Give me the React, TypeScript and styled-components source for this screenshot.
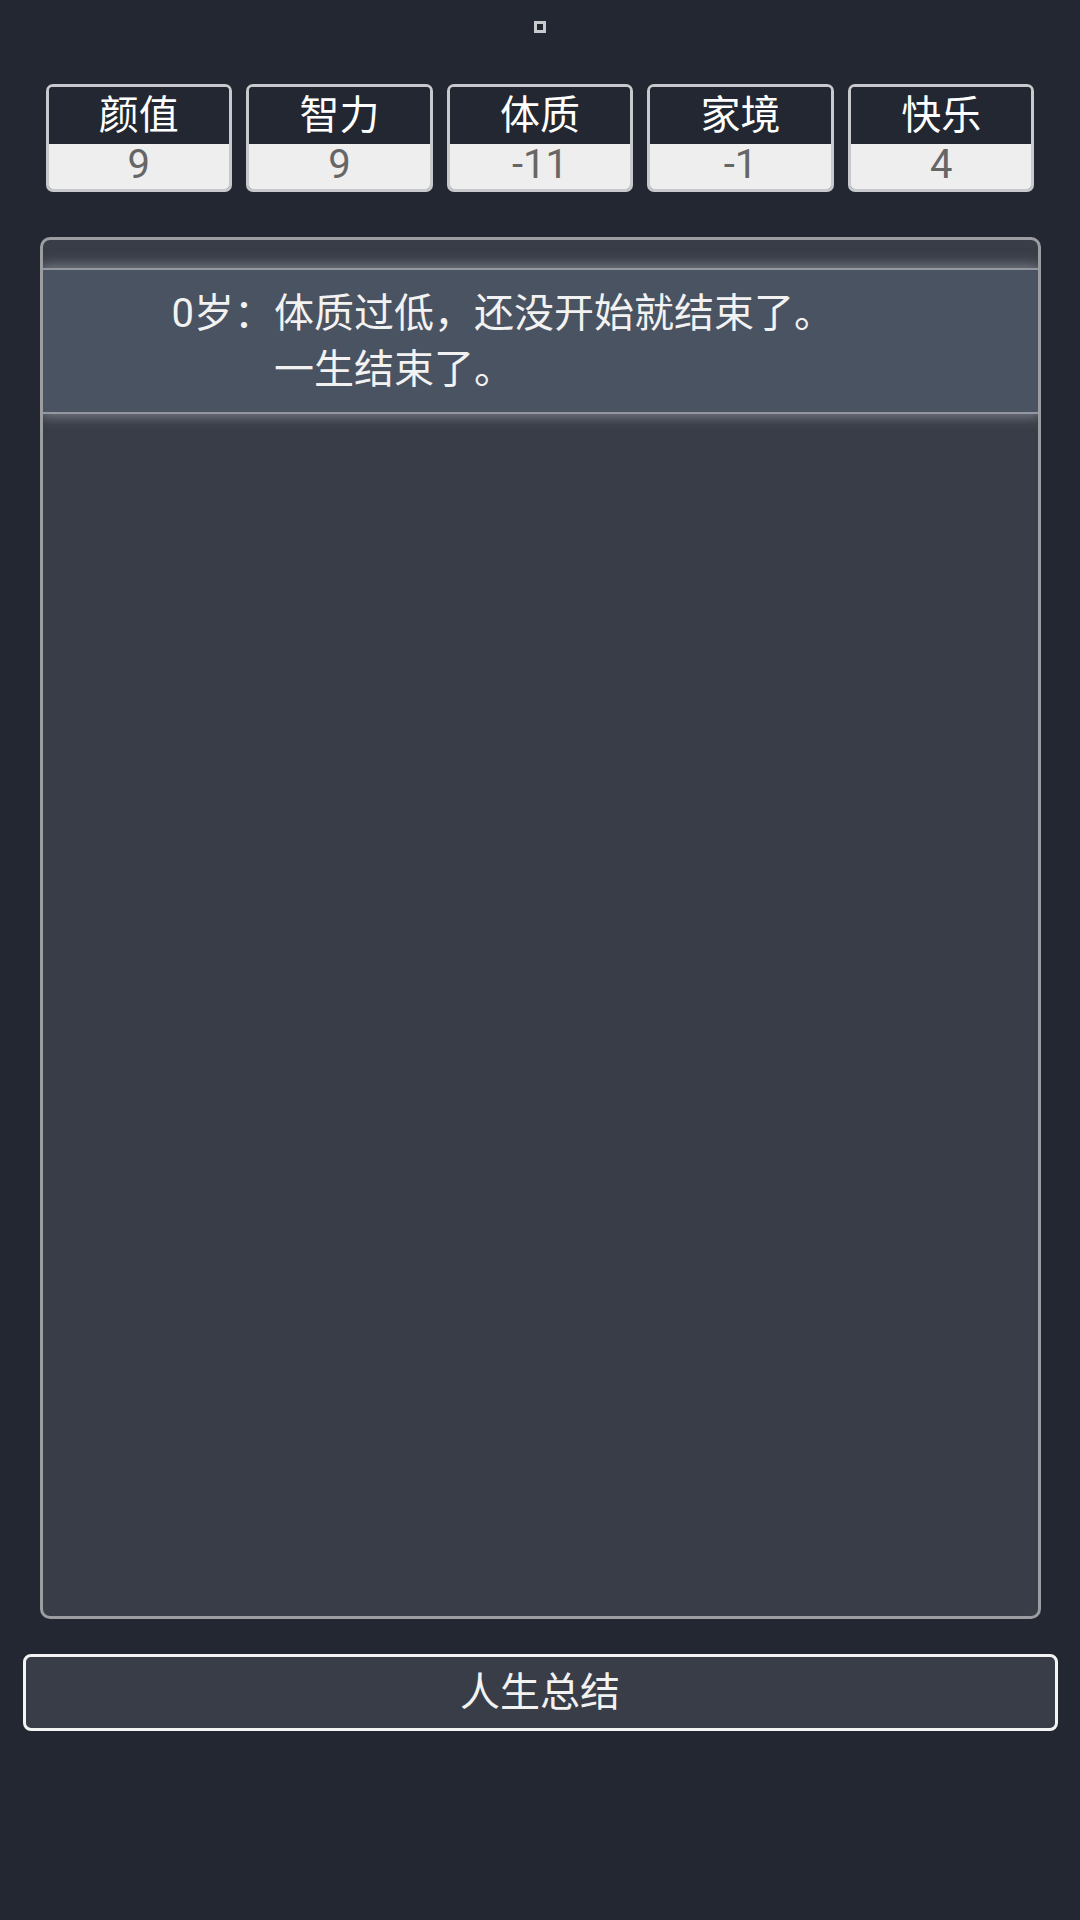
import React from 'react'
import styled, { createGlobalStyle } from 'styled-components'

const GlobalStyle = createGlobalStyle`
  html, body {
    margin: 0;
    padding: 0;
    background: #222731;
  }
  body {
    font-family: Roboto, "Noto Sans CJK SC", "Noto Sans", sans-serif;
    color: #f2f2f2;
  }
`

type Stat = { label: string; value: number }

const stats: Stat[] = [
  { label: '颜值', value: 9 },
  { label: '智力', value: 9 },
  { label: '体质', value: -11 },
  { label: '家境', value: -1 },
  { label: '快乐', value: 4 },
]

const events = [{ age: 0, lines: ['体质过低，还没开始就结束了。', '一生结束了。'] }]

const Page = styled.div`
  width: 1080px;
  min-height: 1920px;
  display: flex;
  flex-direction: column;
  align-items: center;
  box-sizing: border-box;
  padding-top: 21px;
`

const Marker = styled.div`
  width: 12px;
  height: 12px;
  box-sizing: border-box;
  border: 3px solid #c9cacd;
  background: #22262f;
`

const StatRow = styled.div`
  margin-top: 51px;
  width: 989px;
  display: flex;
  gap: 14px;
`

const StatCard = styled.div`
  flex: 1;
  height: 108px;
  box-sizing: border-box;
  border: 3px solid #c8c9cc;
  border-radius: 7px;
  overflow: hidden;
  display: flex;
  flex-direction: column;
`

const StatLabel = styled.div`
  height: 57px;
  background: #222731;
  color: #ffffff;
  font-size: 40px;
  line-height: 58px;
  text-align: center;
`

const StatValue = styled.div`
  flex: 1;
  display: flex;
  align-items: center;
  justify-content: center;
  background: #eeeeee;
  color: #666666;
  font-size: 40px;
  line-height: 40px;
  padding-bottom: 4px;
`

const Panel = styled.div`
  margin-top: 45px;
  width: 1001px;
  height: 1382px;
  box-sizing: border-box;
  border: 3px solid #9c9da1;
  border-radius: 10px;
  background: #393d47;
  overflow: hidden;
`

const EventList = styled.ul`
  list-style: none;
  margin: 0;
  padding: 28px 0 0;
`

const EventItem = styled.li`
  display: flex;
  padding: 16px 0 14px 129px;
  background: #4a5361;
  border-top: 2px solid #9398a0;
  border-bottom: 2px solid #9398a0;
  box-shadow: 0 0 12px 2px rgba(195, 200, 208, 0.5);
  font-size: 40px;
  line-height: 56px;
  color: #f2f2f2;
`

const Age = styled.span`
  flex: none;
  white-space: nowrap;
`

const Lines = styled.div`
  display: flex;
  flex-direction: column;
`

const SummaryButton = styled.button`
  margin-top: 35px;
  width: 1035px;
  height: 77px;
  box-sizing: border-box;
  border: 3px solid #f4f4f4;
  border-radius: 8px;
  background: #393d47;
  color: #f2f2f2;
  font-family: Roboto, "Noto Sans CJK SC", "Noto Sans", sans-serif;
  font-size: 40px;
  line-height: 1;
  padding: 0;
  cursor: pointer;
`

export default function App() {
  return (
    <>
      <GlobalStyle />
      <Page>
        <Marker />
        <StatRow>
          {stats.map(s => (
            <StatCard key={s.label}>
              <StatLabel>{s.label}</StatLabel>
              <StatValue>{s.value}</StatValue>
            </StatCard>
          ))}
        </StatRow>
        <Panel>
          <EventList>
            {events.map(e => (
              <EventItem key={e.age}>
                <Age>{e.age}岁：</Age>
                <Lines>
                  {e.lines.map(l => (
                    <span key={l}>{l}</span>
                  ))}
                </Lines>
              </EventItem>
            ))}
          </EventList>
        </Panel>
        <SummaryButton>人生总结</SummaryButton>
      </Page>
    </>
  )
}
